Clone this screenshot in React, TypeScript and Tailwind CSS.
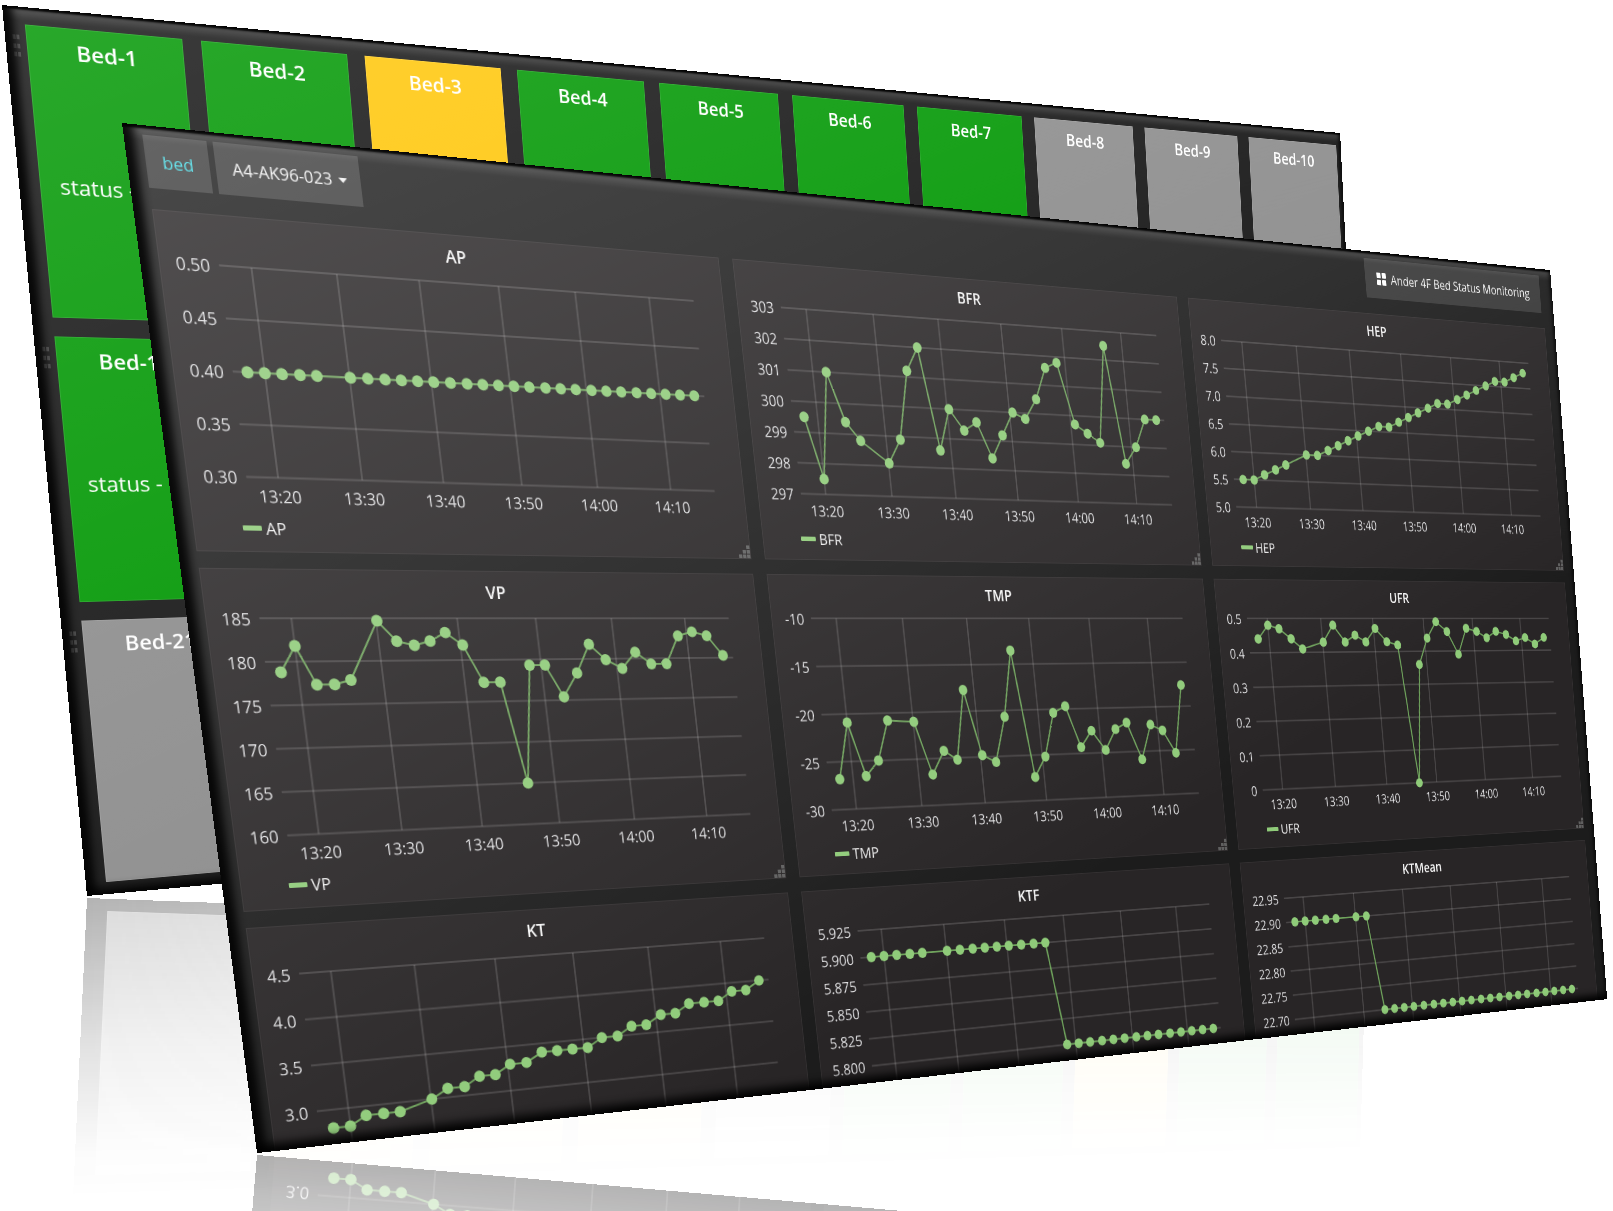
import React, { useEffect, useState } from "react";

type Point = [number, number];
type Quad = [Point, Point, Point, Point];

/* ---------- projection of a flat board onto four corners ---------- */

function solve(rows: number[][], values: number[]): number[] {
  const n = values.length;
  for (let i = 0; i < n; i++) {
    let pivot = i;
    for (let j = i + 1; j < n; j++) {
      if (Math.abs(rows[j][i]) > Math.abs(rows[pivot][i])) pivot = j;
    }
    [rows[i], rows[pivot]] = [rows[pivot], rows[i]];
    [values[i], values[pivot]] = [values[pivot], values[i]];
    for (let j = 0; j < n; j++) {
      if (j === i) continue;
      const f = rows[j][i] / rows[i][i];
      for (let k = i; k < n; k++) rows[j][k] -= f * rows[i][k];
      values[j] -= f * values[i];
    }
  }
  return values.map((v, i) => v / rows[i][i]);
}

function project(width: number, height: number, corners: Quad, scale: number): string {
  const from: Quad = [[0, 0], [width, 0], [width, height], [0, height]];
  const rows: number[][] = [];
  const values: number[] = [];
  from.forEach(([x, y], i) => {
    const u = corners[i][0] * scale;
    const v = corners[i][1] * scale;
    rows.push([x, y, 1, 0, 0, 0, -u * x, -u * y]);
    values.push(u);
    rows.push([0, 0, 0, x, y, 1, -v * x, -v * y]);
    values.push(v);
  });
  const h = solve(rows, values);
  return `matrix3d(${[h[0], h[3], 0, h[6], h[1], h[4], 0, h[7], 0, 0, 1, 0, h[2], h[5], 0, 1].join(",")})`;
}

const SCENE_WIDTH = 1613;
const BOARD: Quad = [[122, 123], [1550, 270], [1607, 999], [257, 1153]];
const WALL: Quad = [[2, 5], [1340, 133], [1372, 778], [87, 896]];
const BOARD_MIRROR: Quad = [[252, 1214], [1606, 1314], [1607, 1272], [257, 1155]];
const WALL_MIRROR: Quad = [[73, 1198], [1360, 1156], [1366, 946], [87, 898]];

function useSceneScale() {
  const [width, setWidth] = useState(window.innerWidth);
  useEffect(() => {
    const onResize = () => setWidth(window.innerWidth);
    window.addEventListener("resize", onResize);
    return () => window.removeEventListener("resize", onResize);
  }, []);
  return width / SCENE_WIDTH;
}

/* ---------- data ---------- */

const MINUTES = [
  -2, 0, 2, 4.1, 6.1, 10.1, 12.2, 14.3, 16.3, 18.3, 20.3, 22.4, 24.5, 26.5, 28.5, 30.5, 32.5, 34.6,
  36.6, 38.6, 40.7, 42.7, 44.7, 46.8, 48.8, 50.8, 52.8, 54.8,
];
const TIMES = ["13:20", "13:30", "13:40", "13:50", "14:00", "14:10"];

const fill = (value: number, count: number) => Array<number>(count).fill(value);

type Series = {
  name: string;
  left: number;
  max: number;
  min: number;
  labels: string[];
  values: number[];
};

const ROW_ONE: Series[] = [
  { name: "AP", left: 58, max: 0.5, min: 0.3, labels: ["0.50", "0.45", "0.40", "0.35", "0.30"], values: fill(0.4, 28) },
  {
    name: "BFR", left: 54, max: 303, min: 297,
    labels: ["303", "302", "301", "300", "299", "298", "297"],
    values: [
      299.5, 297.5, 301, 299.4, 298.8, 298.1, 298.9, 301.2, 302, 298.6, 300, 299.3, 299.6, 298.4, 299.2, 300,
      299.8, 300.5, 301.6, 301.8, 299.7, 299.4, 299.1, 302.5, 298.4, 299, 300, 300,
    ],
  },
  {
    name: "HEP", left: 46, max: 8, min: 5,
    labels: ["8.0", "7.5", "7.0", "6.5", "6.0", "5.5", "5.0"],
    values: [
      5.5, 5.5, 5.6, 5.7, 5.8, 6, 6, 6.1, 6.2, 6.3, 6.4, 6.5, 6.6, 6.6, 6.7, 6.8, 6.9, 7, 7.1, 7.1, 7.2, 7.3,
      7.4, 7.5, 7.6, 7.6, 7.7, 7.8,
    ],
  },
];

const ROW_TWO: Series[] = [
  {
    name: "VP", left: 53, max: 185, min: 160,
    labels: ["185", "180", "175", "170", "165", "160"],
    values: [
      178.8, 181.8, 177.3, 177.3, 177.8, 184.7, 182.3, 181.8, 182.3, 183.3, 181.8, 177.3, 177.3, 165, 179.3,
      179.3, 175.4, 178.3, 181.8, 179.9, 178.8, 180.8, 179.3, 179.3, 182.8, 183.3, 182.8, 180.3,
    ],
  },
  {
    name: "TMP", left: 50, max: -10, min: -30,
    labels: ["-10", "-15", "-20", "-25", "-30"],
    values: [
      -26.8, -20.9, -26.6, -25, -20.8, -21, -26.7, -24.2, -25.2, -17.7, -24.8, -25.6, -20.7, -13.5, -27.4,
      -25.2, -20.4, -19.7, -24.3, -22.5, -24.7, -22.4, -21.7, -25.9, -22, -22.7, -25.3, -17.6,
    ],
  },
  {
    name: "UFR", left: 47, max: 0.5, min: 0,
    labels: ["0.5", "0.4", "0.3", "0.2", "0.1", "0"],
    values: [
      0.44, 0.48, 0.47, 0.44, 0.41, 0.43, 0.48, 0.43, 0.45, 0.43, 0.47, 0.43, 0.42, 0, 0.36, 0.44, 0.49, 0.46,
      0.39, 0.47, 0.46, 0.44, 0.46, 0.45, 0.43, 0.44, 0.42, 0.44,
    ],
  },
];

const KT: Series = {
  name: "KT", left: 47, max: 4.5, min: 2.5,
  labels: ["4.5", "4.0", "3.5", "3.0"],
  values: [
    2.8, 2.8, 2.9, 2.9, 2.9, 3, 3.1, 3.1, 3.2, 3.2, 3.3, 3.3, 3.4, 3.4, 3.4, 3.4, 3.5, 3.5, 3.6, 3.6, 3.7, 3.7,
    3.8, 3.8, 3.8, 3.9, 3.9, 4,
  ],
};

const ROW_THREE: Series[] = [
  KT,
  {
    name: "KTF", left: 67, max: 5.925, min: 5.775,
    labels: ["5.925", "5.900", "5.875", "5.850", "5.825", "5.800"],
    values: [...fill(5.9, 14), ...fill(5.8, 14)],
  },
  {
    name: "KTMean", left: 66, max: 22.95, min: 22.65,
    labels: ["22.95", "22.90", "22.85", "22.80", "22.75", "22.70"],
    values: [...fill(22.9, 7), ...fill(22.7, 21)],
  },
];

/* ---------- charts ---------- */

const CHART_WIDTH = 616;
const PLOT_RIGHT = 580;
const PLOT_TOP = 3;

type ChartProps = { series: Series; plotHeight: number; showTimes: boolean; labels?: string[] };

function Chart({ series, plotHeight, showTimes, labels = series.labels }: ChartProps) {
  const { left, max, min, values } = series;
  const x = (minute: number) => left + ((minute + 3.7) / 59.9) * (PLOT_RIGHT - left);
  const y = (value: number) => PLOT_TOP + ((max - value) / (max - min)) * plotHeight;
  const bottom = PLOT_TOP + plotHeight;
  const points = values.map((v, i): Point => [x(MINUTES[i]), y(v)]);

  return (
    <svg
      className="block w-full overflow-visible"
      viewBox={`0 0 ${CHART_WIDTH} ${bottom + 33}`}
      role="img"
      aria-label={`${series.name} over time`}
    >
      <g className="stroke-white/15" strokeWidth="2">
        {series.labels.map((label) => (
          <line key={label} x1={left} x2={PLOT_RIGHT} y1={y(Number(label))} y2={y(Number(label))} />
        ))}
        {TIMES.map((time, i) => (
          <line key={time} x1={x(i * 10)} x2={x(i * 10)} y1={PLOT_TOP} y2={bottom} />
        ))}
      </g>
      <polyline
        className="fill-none stroke-[#6fa35c]"
        strokeWidth="2"
        points={points.map((p) => p.join(",")).join(" ")}
      />
      <g className="fill-[#8fcb79]">
        {points.map(([cx, cy], i) => (
          <circle key={i} cx={cx} cy={cy} r="6" />
        ))}
      </g>
      <g className="fill-[#e2e2e4] text-[17px]">
        {labels.map((label) => (
          <text key={label} x={left - 9} y={y(Number(label)) + 7} textAnchor="end">
            {label}
          </text>
        ))}
        {showTimes &&
          TIMES.map((time, i) => (
            <text key={time} x={x(i * 10)} y={bottom + 25} textAnchor="middle">
              {time}
            </text>
          ))}
      </g>
    </svg>
  );
}

function Grip() {
  return (
    <svg className="absolute right-0 bottom-0 h-3.5 w-3.5 fill-[#606060]" viewBox="0 0 14 14" aria-hidden="true">
      {[[10, 0], [5, 5], [10, 5], [0, 10], [5, 10], [10, 10]].map(([x, y]) => (
        <rect key={`${x}-${y}`} x={x} y={y} width="4" height="4" />
      ))}
    </svg>
  );
}

type PanelProps = { series: Series; plotHeight: number; cut?: boolean };

function ChartPanel({ series, plotHeight, cut = false }: PanelProps) {
  return (
    <section className="relative border border-white/5 bg-[#282526]">
      <h2 className="h-[45px] text-center text-[18px] leading-[43px] font-semibold text-[#f6f6f6]">{series.name}</h2>
      <Chart series={series} plotHeight={plotHeight} showTimes={!cut} />
      {!cut && (
        <>
          <div className="flex h-[34px] items-center gap-1 pl-12 text-[17px] text-[#ececec]">
            <span className="h-[5px] w-[19px] rounded-[1px] bg-[#8fcb79]" />
            {series.name}
          </div>
          <Grip />
        </>
      )}
    </section>
  );
}

/* ---------- front board ---------- */

function Toolbar() {
  return (
    <div className="flex items-start justify-between text-[17px] text-[#f2f2f2]">
      <div className="flex gap-1.5">
        <label htmlFor="bed" className="flex h-[50px] items-center bg-[#3e3e3e] px-4 text-[#45dbe6]">
          bed
        </label>
        <div className="flex h-[50px] items-center bg-[#3e3e3e] pr-3.5">
          <select id="bed" className="h-full appearance-none bg-transparent pl-4 outline-none">
            <option>A4-AK96-023</option>
          </select>
          <svg className="ml-1.5 h-[5px] w-[9px] fill-[#f2f2f2]" viewBox="0 0 9 5" aria-hidden="true">
            <path d="M0 0H9L4.5 5Z" />
          </svg>
        </div>
      </div>
      <a href="#dashboard" className="mr-1 flex h-[50px] items-center gap-2 bg-[#383838] pr-5 pl-5">
        <svg className="h-4 w-4 fill-white" viewBox="0 0 16 16" aria-hidden="true">
          <rect width="7" height="7" rx="1" />
          <rect x="9" width="7" height="7" rx="1" />
          <rect y="9" width="7" height="7" rx="1" />
          <rect x="9" y="9" width="7" height="7" rx="1" />
        </svg>
        Ander 4F Bed Status Monitoring
      </a>
    </div>
  );
}

function Board() {
  return (
    <div className="relative h-[1000px] w-[1920px] overflow-hidden bg-[#1c1c1c] pt-[9px] pr-[19px] pl-[18px]">
      <Toolbar />
      <div className="mt-5 grid grid-cols-3 grid-rows-[327px_338px_338px] gap-x-[17px] gap-y-4">
        {ROW_ONE.map((series) => (
          <ChartPanel key={series.name} series={series} plotHeight={205} />
        ))}
        {ROW_TWO.map((series) => (
          <ChartPanel key={series.name} series={series} plotHeight={216} />
        ))}
        {ROW_THREE.map((series) => (
          <ChartPanel key={series.name} series={series} plotHeight={187} cut />
        ))}
      </div>
      <div className="pointer-events-none absolute inset-0 bg-[linear-gradient(157deg,rgba(255,255,255,0.2)_0%,rgba(255,255,255,0)_68%)]" />
      <div className="pointer-events-none absolute inset-0 shadow-[inset_16px_0_8px_-6px_rgba(0,0,0,0.85),inset_0_-14px_10px_-6px_rgba(0,0,0,0.9),inset_-6px_0_6px_-3px_rgba(0,0,0,0.7),inset_0_5px_2px_-2px_rgba(0,0,0,0.9),inset_0_12px_6px_-2px_rgba(255,255,255,0.12)]" />
    </div>
  );
}

/* ---------- back wall of beds ---------- */

const GREEN = "bg-[#0c9c0e]";
const AMBER = "bg-[#ffc914]";
const GREY = "bg-[#929292]";

const FIRST_ROW = [GREEN, GREEN, AMBER, GREEN, GREEN, GREEN, GREEN, GREY, GREY, GREY];
const LAST_ROW = [GREY, AMBER, AMBER, AMBER, GREY, GREEN, GREEN, AMBER, GREEN, GREEN];

type BedProps = { color: string; name?: string; status?: boolean };

function BedTile({ color, name, status = false }: BedProps) {
  return (
    <div className={`${color} border border-white/10 pt-3 text-[24px] text-white`}>
      {name && <h3 className="text-center leading-7 font-semibold">{name}</h3>}
      {status && <p className="mt-[120px] pl-5 leading-8">status -</p>}
    </div>
  );
}

function Handle() {
  return (
    <div className="mt-3 grid h-6 w-2.5 grid-cols-[4px_3px] content-between" aria-hidden="true">
      {[0, 1, 2, 3, 4, 5].map((i) => (
        <span key={i} className="h-[5px] w-[3px] bg-[#505050]" />
      ))}
    </div>
  );
}

function Wall() {
  return (
    <div className="relative flex h-[1000px] w-[1920px] flex-col gap-[21px] overflow-hidden bg-[#202020] pt-[19px] pr-[9px] pb-[14px] pl-2">
      <div className="flex h-[324px] gap-1">
        <Handle />
        <div className="grid flex-1 grid-cols-10 gap-x-[21px]">
          {FIRST_ROW.map((color, i) => (
            <BedTile key={i} color={color} name={`Bed-${i + 1}`} status={i === 0} />
          ))}
        </div>
      </div>
      <div className="flex h-[300px] gap-1">
        <Handle />
        <div className="grid flex-1 grid-cols-10 gap-x-[21px]">
          <div className={`${GREEN} border border-white/10 pt-3 text-[24px] text-white`}>
            <h3 className="text-center leading-7 font-semibold">Bed-11</h3>
            <p className="mt-[109px] pl-5 leading-8">status -</p>
          </div>
        </div>
      </div>
      <div className="flex h-[301px] gap-1">
        <Handle />
        <div className="grid flex-1 grid-cols-10 gap-x-[21px]">
          <BedTile color={GREY} name="Bed-21" />
        </div>
      </div>
      <div className="pointer-events-none absolute inset-0 bg-[linear-gradient(157deg,rgba(255,255,255,0.12)_0%,rgba(255,255,255,0)_60%)]" />
      <div className="pointer-events-none absolute inset-0 shadow-[inset_16px_0_8px_-6px_rgba(0,0,0,0.85),inset_0_-14px_10px_-6px_rgba(0,0,0,0.8),inset_-7px_0_6px_-3px_rgba(0,0,0,0.7),inset_0_5px_2px_-2px_rgba(0,0,0,0.9),inset_0_12px_6px_-2px_rgba(255,255,255,0.12)]" />
    </div>
  );
}

/* ---------- reflections on the floor ---------- */

function WallReflection() {
  return (
    <div
      className="[mask-image:linear-gradient(to_right,black_0%,rgba(0,0,0,0.85)_9%,rgba(0,0,0,0.3)_20%,rgba(0,0,0,0.3)_100%)]"
      aria-hidden="true"
    >
      <div className="flex h-[340px] w-[1920px] flex-col justify-end bg-[#202020] pr-[9px] pb-[14px] pl-[22px] [mask-image:linear-gradient(to_top,rgba(0,0,0,0.34)_0%,rgba(0,0,0,0.13)_50%,rgba(0,0,0,0.02)_85%,transparent_100%)]">
        <div className="grid h-[301px] grid-cols-10 gap-x-[21px]">
          {LAST_ROW.map((color, i) => (
            <BedTile key={i} color={color} />
          ))}
        </div>
      </div>
    </div>
  );
}

function BoardReflection() {
  return (
    <div
      className="h-[60px] w-[1920px] overflow-hidden bg-[#1c1c1c] pr-[19px] pl-[18px] [mask-image:linear-gradient(to_top,rgba(0,0,0,0.34)_0%,rgba(0,0,0,0.25)_100%)]"
      aria-hidden="true"
    >
      <div className="-mt-[119px] grid grid-cols-3 gap-x-[17px]">
        <div className="bg-[#252324]">
          <Chart series={KT} plotHeight={187} showTimes={false} labels={["3.0"]} />
        </div>
        <div className="bg-[#252324]" />
        <div className="bg-[#252324]" />
      </div>
    </div>
  );
}

/* ---------- scene ---------- */

type PlaneProps = { width: number; height: number; corners: Quad; scale: number; children: React.ReactNode };

function Plane({ width, height, corners, scale, children }: PlaneProps) {
  return (
    <div className="absolute top-0 left-0 origin-top-left" style={{ transform: project(width, height, corners, scale) }}>
      {children}
    </div>
  );
}

export default function App() {
  const scale = useSceneScale();
  return (
    <main className="relative aspect-[1613/1211] w-full overflow-hidden bg-white font-['Open_Sans','Noto_Sans',sans-serif]">
      <Plane width={1920} height={340} corners={WALL_MIRROR} scale={scale}>
        <WallReflection />
      </Plane>
      <Plane width={1920} height={1000} corners={WALL} scale={scale}>
        <Wall />
      </Plane>
      <Plane width={1920} height={60} corners={BOARD_MIRROR} scale={scale}>
        <BoardReflection />
      </Plane>
      <Plane width={1920} height={1000} corners={BOARD} scale={scale}>
        <Board />
      </Plane>
    </main>
  );
}
